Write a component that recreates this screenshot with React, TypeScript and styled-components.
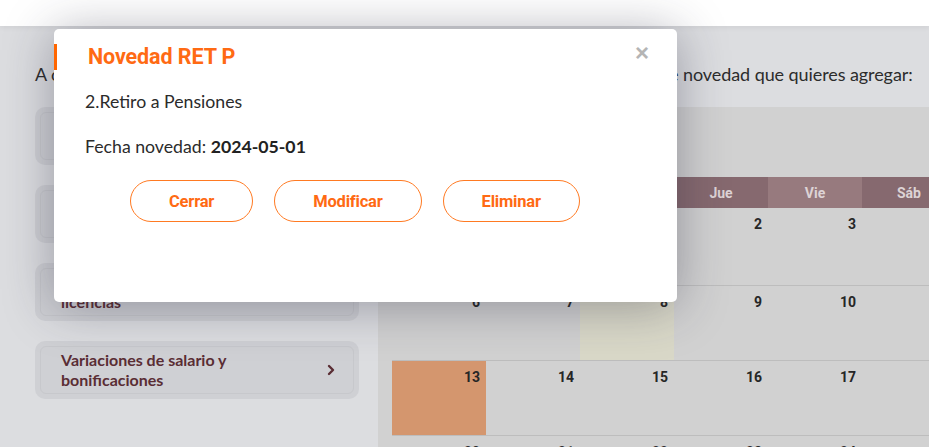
import styled, { createGlobalStyle } from 'styled-components';

const GlobalStyle = createGlobalStyle`
  html, body {
    margin: 0;
    padding: 0;
    width: 929px;
    height: 447px;
    overflow: hidden;
    background: #dcdde0;
    font-family: Lato, 'Noto Sans', sans-serif;
  }
`;

const Page = styled.div`
  position: relative;
  width: 929px;
  height: 447px;
  overflow: hidden;
`;

const TopBar = styled.div`
  height: 26px;
  background: #ffffff;
  box-shadow: 0 2px 5px rgba(0, 0, 0, 0.05);
`;

const Main = styled.div`
  padding-left: 35px;
`;

const Intro = styled.p`
  margin: 38px 0 0;
  font-size: 18px;
  line-height: 20px;
  letter-spacing: -0.08px;
  color: #2c2c2c;
  white-space: nowrap;
`;

const ContentRow = styled.div`
  display: flex;
  gap: 19px;
  margin-top: 23px;
`;

const Sidebar = styled.div`
  display: flex;
  flex-direction: column;
  gap: 20px;
  width: 324px;
  flex-shrink: 0;
`;

const MenuCard = styled.div`
  height: 58px;
  box-sizing: border-box;
  padding: 5px;
  background: #cfd0d4;
  border-radius: 10px;
`;

const MenuInner = styled.div`
  display: flex;
  align-items: center;
  justify-content: space-between;
  height: 100%;
  box-sizing: border-box;
  padding: 0 18px 0 20px;
  border: 1px solid #c7c8cc;
  border-radius: 6px;
  font-size: 16px;
  line-height: 20px;
  font-weight: 700;
  color: #5a2d34;
`;

const MenuLabel = styled.span`
  max-width: 240px;
`;

const Calendar = styled.div`
  flex: 1;
  height: 340px;
  background: #d1d1d1;
  padding: 70px 0 0 14px;
  overflow: hidden;
`;

const WeekHeader = styled.div`
  display: grid;
  grid-template-columns: repeat(7, 94px);
  height: 31px;
`;

const DayName = styled.div<{ $light?: boolean }>`
  display: flex;
  align-items: center;
  justify-content: center;
  background: ${(p) => (p.$light ? '#977a7e' : '#86696f')};
  font-family: Roboto, 'Liberation Sans', sans-serif;
  font-weight: 700;
  font-size: 14px;
  color: #ddd3d5;
`;

const WeekRow = styled.div<{ $first?: boolean }>`
  display: grid;
  grid-template-columns: repeat(7, 94px);
  box-sizing: border-box;
  height: ${(p) => (p.$first ? '77px' : '75px')};
  border-top: ${(p) => (p.$first ? 'none' : '1px solid #bdbdbd')};
`;

const DayCell = styled.div<{ $tone?: 'orange' | 'today' }>`
  box-sizing: border-box;
  padding: 8px 6px 0 0;
  text-align: right;
  background: ${(p) =>
    p.$tone === 'orange' ? '#d4966e' : p.$tone === 'today' ? '#d9d8c8' : 'transparent'};
  font-family: Roboto, 'Liberation Sans', sans-serif;
  font-weight: 700;
  font-size: 14px;
  line-height: 16px;
  color: #262626;
`;

const Modal = styled.div`
  position: absolute;
  left: 54px;
  top: 29px;
  width: 623px;
  height: 273px;
  background: #ffffff;
  border-radius: 5px;
  box-shadow: 0 4px 50px rgba(40, 40, 60, 0.38);
`;

const ModalTitle = styled.h2`
  margin: 15px 0 0;
  height: 26px;
  border-left: 3px solid #ff6600;
  padding-left: 31px;
  font-family: Roboto, 'Liberation Sans', sans-serif;
  font-weight: 700;
  font-size: 21.5px;
  line-height: 26px;
  letter-spacing: -0.1px;
  color: #ff6a13;
`;

const CloseButton = styled.button`
  position: absolute;
  top: 11px;
  right: 28px;
  border: none;
  background: none;
  padding: 0;
  font-family: 'Liberation Sans', sans-serif;
  font-weight: 700;
  font-size: 24px;
  line-height: 26px;
  color: #b5b5b5;
  cursor: pointer;
`;

const ModalBody = styled.div`
  padding-left: 31px;
`;

const Line = styled.p<{ $gap: number }>`
  margin: ${(p) => p.$gap}px 0 0;
  font-size: 17.7px;
  line-height: 20px;
  color: #2b2b2b;
`;

const Strong = styled.b`
  font-weight: 700;
  color: #222;
`;

const Actions = styled.div`
  display: flex;
  gap: 21px;
  margin-top: 23px;
  padding-left: 45px;
`;

const PillButton = styled.button`
  height: 42px;
  padding: 0 38px;
  border: 1px solid #ff7a22;
  border-radius: 21px;
  background: #ffffff;
  font-family: Roboto, 'Liberation Sans', sans-serif;
  font-weight: 700;
  font-size: 16.5px;
  letter-spacing: -0.2px;
  color: #ff6a13;
  cursor: pointer;
`;

const Chevron = () => (
  <svg width="8" height="12" viewBox="0 0 8 12" fill="none">
    <path d="M2 2 L6 6 L2 10" stroke="#5a2d34" strokeWidth="2.4" strokeLinecap="round" strokeLinejoin="round" />
  </svg>
);

const menuItems = [
  'Ingresos y retiros',
  'Horas extras y recargos',
  'Incapacidades, ausencias y licencias',
  'Variaciones de salario y bonificaciones',
];

const dayNames = ['Lun', 'Mar', 'Mié', 'Jue', 'Vie', 'Sáb', 'Dom'];

const weeks: (number | null)[][] = [
  [null, null, 1, 2, 3, 4, 5],
  [6, 7, 8, 9, 10, 11, 12],
  [13, 14, 15, 16, 17, 18, 19],
  [20, 21, 22, 23, 24, 25, 26],
];

export default function App() {
  return (
    <Page>
      <GlobalStyle />
      <TopBar />
      <Main>
        <Intro>
          A continuación selecciona en el calendario la fecha y después en el menú el tipo de novedad que quieres agregar:
        </Intro>
        <ContentRow>
          <Sidebar>
            {menuItems.map((item, i) => (
              <MenuCard key={item}>
                <MenuInner>
                  <MenuLabel>{item}</MenuLabel>
                  {i === menuItems.length - 1 && <Chevron />}
                </MenuInner>
              </MenuCard>
            ))}
          </Sidebar>
          <Calendar>
            <WeekHeader>
              {dayNames.map((d) => (
                <DayName key={d} $light={d === 'Vie'}>
                  {d}
                </DayName>
              ))}
            </WeekHeader>
            {weeks.map((week, w) => (
              <WeekRow key={w} $first={w === 0}>
                {week.map((day, i) => (
                  <DayCell key={i} $tone={day === 13 ? 'orange' : day === 8 ? 'today' : undefined}>
                    {day}
                  </DayCell>
                ))}
              </WeekRow>
            ))}
          </Calendar>
        </ContentRow>
      </Main>

      <Modal>
        <ModalTitle>Novedad RET P</ModalTitle>
        <CloseButton>×</CloseButton>
        <ModalBody>
          <Line $gap={22}>2.Retiro a Pensiones</Line>
          <Line $gap={25}>
            Fecha novedad: <Strong>2024-05-01</Strong>
          </Line>
          <Actions>
            <PillButton>Cerrar</PillButton>
            <PillButton>Modificar</PillButton>
            <PillButton>Eliminar</PillButton>
          </Actions>
        </ModalBody>
      </Modal>
    </Page>
  );
}
